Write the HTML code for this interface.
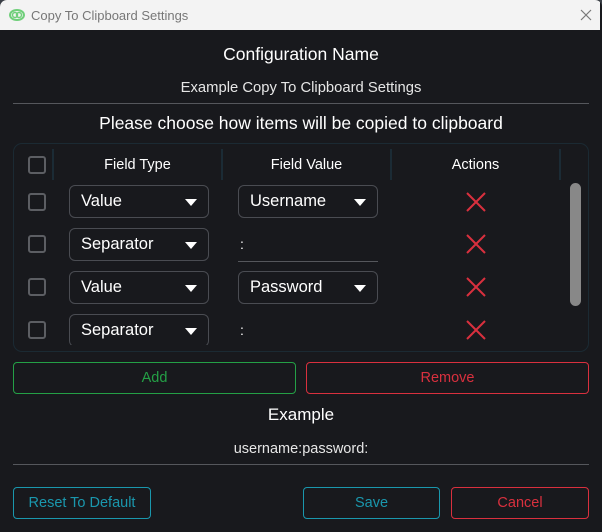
<!DOCTYPE html>
<html><head><meta charset="utf-8"><style>
*{margin:0;padding:0;box-sizing:border-box}
body{width:602px;height:532px;background:#3a3f46;font-family:"Liberation Sans",sans-serif;overflow:hidden;position:relative}
.win{position:absolute;left:1px;top:1px;width:600px;height:530px;background:#18191d;border-radius:7px 7px 0 0;overflow:hidden}
.tb{position:absolute;left:0;top:0;width:600px;height:30px;background:#f3f3f3}
.a{position:absolute}
.c{position:absolute;left:0;width:602px;text-align:center;color:#fff}
.cb{position:absolute;width:18px;height:18px;border:2px solid #5c5e63;border-radius:3px}
.combo{position:absolute;width:140px;height:33px;border:1px solid #4a4c52;border-radius:6px;color:#fff;font-size:16.5px;line-height:31px;padding-left:11px}
.combo:after{content:"";position:absolute;right:11px;top:13px;border-left:6px solid transparent;border-right:6px solid transparent;border-top:7px solid #fff}
.x{position:absolute;width:22px;height:22px}
.sep{position:absolute;top:149px;width:2px;height:31px;background:#1b2b35}
.btn{position:absolute;height:32px;border:1px solid;border-radius:4px;text-align:center;line-height:30px;font-size:14.5px}
.line{position:absolute;height:1px;background:#55575c}
</style></head><body>
<div class="win" style="left:0;top:0;width:602px;height:532px">
<div class="tb"></div>
<svg class="a" style="left:9px;top:9px" width="16" height="12"><ellipse cx="8" cy="6" rx="7" ry="5" fill="none" stroke="#6fcf7a" stroke-width="2"/><circle cx="6" cy="6" r="2.5" fill="none" stroke="#6fcf7a" stroke-width="1.5"/><circle cx="10" cy="6" r="2.5" fill="none" stroke="#6fcf7a" stroke-width="1.5"/></svg>
<div class="a" style="left:31px;top:8px;font-size:13px;color:#777">Copy To Clipboard Settings</div>
<svg class="a" style="left:580px;top:9px" width="12" height="12"><path d="M1 1L11 11M11 1L1 11" stroke="#777" stroke-width="1.2"/></svg>

<div class="c" style="top:44px;font-size:17.5px">Configuration Name</div>
<div class="c" style="top:80px;font-size:14.8px;color:#e6e6e6">Example Copy To Clipboard Settings</div>
<div class="line" style="left:13px;top:103px;width:576px"></div>
<div class="c" style="top:113px;font-size:17.5px">Please choose how items will be copied to clipboard</div>

<div class="a" style="left:13px;top:143px;width:576px;height:209px;border:1px solid #1b2a33;border-radius:9px"></div>
<div class="cb" style="left:28px;top:156px"></div>
<div class="sep" style="left:52px"></div><div class="sep" style="left:221px"></div><div class="sep" style="left:390px"></div><div class="sep" style="left:559px"></div>
<div class="a" style="left:53px;top:157px;width:169px;text-align:center;color:#fff;font-size:14.5px">Field Type</div>
<div class="a" style="left:222px;top:157px;width:169px;text-align:center;color:#fff;font-size:14.5px">Field Value</div>
<div class="a" style="left:391px;top:157px;width:169px;text-align:center;color:#fff;font-size:14.5px">Actions</div>
<div class="a" style="left:570px;top:183px;width:11px;height:123px;background:#888;border-radius:6px"></div>

<div class="a" style="left:14px;top:180px;width:550px;height:165px;overflow:hidden">
 <div class="cb" style="left:14px;top:13px"></div>
 <div class="combo" style="left:55px;top:5px">Value</div>
 <div class="combo" style="left:224px;top:5px">Username</div>
 <div class="cb" style="left:14px;top:55px"></div>
 <div class="combo" style="left:55px;top:48px">Separator</div>
 <div class="a" style="left:226px;top:56px;color:#fff;font-size:14px">:</div>
 <div class="line" style="left:224px;top:81px;width:140px"></div>
 <div class="cb" style="left:14px;top:98px"></div>
 <div class="combo" style="left:55px;top:91px">Value</div>
 <div class="combo" style="left:224px;top:91px">Password</div>
 <div class="cb" style="left:14px;top:141px"></div>
 <div class="combo" style="left:55px;top:134px">Separator</div>
 <div class="a" style="left:226px;top:142px;color:#fff;font-size:14px">:</div>
</div>
<svg class="x" style="left:465px;top:191px"><path d="M2 2L20 20M20 2L2 20" stroke="#d9303e" stroke-width="2"/></svg>
<svg class="x" style="left:465px;top:233px"><path d="M2 2L20 20M20 2L2 20" stroke="#d9303e" stroke-width="2"/></svg>
<svg class="x" style="left:465px;top:276px"><path d="M2 2L20 20M20 2L2 20" stroke="#d9303e" stroke-width="2"/></svg>
<svg class="x" style="left:465px;top:319px"><path d="M2 2L20 20M20 2L2 20" stroke="#d9303e" stroke-width="2"/></svg>

<div class="btn" style="left:13px;top:362px;width:283px;border-color:#24a046;color:#24a046">Add</div>
<div class="btn" style="left:306px;top:362px;width:283px;border-color:#d9303e;color:#d9303e">Remove</div>
<div class="c" style="top:405px;font-size:17px">Example</div>
<div class="c" style="top:441px;font-size:14.5px;color:#e6e6e6">username:password:</div>
<div class="line" style="left:13px;top:464px;width:576px"></div>
<div class="btn" style="left:13px;top:487px;width:138px;border-color:#1a97ad;color:#1a97ad">Reset To Default</div>
<div class="btn" style="left:303px;top:487px;width:137px;border-color:#1a97ad;color:#1a97ad">Save</div>
<div class="btn" style="left:451px;top:487px;width:138px;border-color:#d9303e;color:#d9303e">Cancel</div>
</div>
</body></html>
